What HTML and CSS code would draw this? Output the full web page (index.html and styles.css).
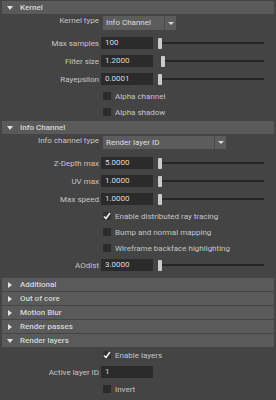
FILE: index.html
```html
<!DOCTYPE html>
<html lang="en">
  <head>
    <meta charset="UTF-8" />
    <meta name="viewport" content="width=device-width, initial-scale=1.0" />
    <title>Render Settings</title>
    <link rel="stylesheet" href="styles.css">
  </head>
  <body>
    <div class="panel">
      <!-- Kernel -->
      <div class="section-head open"><span class="arrow"></span>Kernel</div>
      <div class="section-body">
        <div class="row select-row">
          <div class="label">Kernel type</div>
          <div class="dropdown small">
            <span class="dropdown-text">Info Channel</span>
            <span class="dropdown-btn"><span class="down"></span></span>
          </div>
        </div>
        <div class="row">
          <div class="label">Max samples</div>
          <div class="field">100</div>
          <div class="slider"><div class="knob"></div><div class="track"></div></div>
        </div>
        <div class="row">
          <div class="label">Filter size</div>
          <div class="field">1.2000</div>
          <div class="slider"><div class="knob moved"></div><div class="track"></div></div>
        </div>
        <div class="row">
          <div class="label">Rayepsilon</div>
          <div class="field">0.0001</div>
          <div class="slider"><div class="knob"></div><div class="track"></div></div>
        </div>
        <div class="row check-row">
          <div class="label"></div>
          <div class="checkbox"></div>
          <span class="check-label">Alpha channel</span>
        </div>
        <div class="row check-row">
          <div class="label"></div>
          <div class="checkbox"></div>
          <span class="check-label">Alpha shadow</span>
        </div>
      </div>

      <!-- Info Channel -->
      <div class="section-head open"><span class="arrow"></span>Info Channel</div>
      <div class="section-body info">
        <div class="row select-row">
          <div class="label">Info channel type</div>
          <div class="dropdown wide">
            <span class="dropdown-text">Render layer ID</span>
            <span class="dropdown-btn"><span class="down"></span></span>
          </div>
        </div>
        <div class="row">
          <div class="label">Z-Depth max</div>
          <div class="field">5.0000</div>
          <div class="slider"><div class="knob"></div><div class="track"></div></div>
        </div>
        <div class="row">
          <div class="label">UV max</div>
          <div class="field">1.0000</div>
          <div class="slider"><div class="knob"></div><div class="track"></div></div>
        </div>
        <div class="row">
          <div class="label">Max speed</div>
          <div class="field">1.0000</div>
          <div class="slider"><div class="knob"></div><div class="track"></div></div>
        </div>
        <div class="row check-row">
          <div class="label"></div>
          <div class="checkbox checked">
            <svg width="8" height="8" viewBox="0 0 8 8"><polyline points="1,4.5 3,6.5 7,1" fill="none" stroke="#f0f0f0" stroke-width="1.6"/></svg>
          </div>
          <span class="check-label">Enable distributed ray tracing</span>
        </div>
        <div class="row check-row">
          <div class="label"></div>
          <div class="checkbox"></div>
          <span class="check-label">Bump and normal mapping</span>
        </div>
        <div class="row check-row">
          <div class="label"></div>
          <div class="checkbox"></div>
          <span class="check-label">Wireframe backface highlighting</span>
        </div>
        <div class="row">
          <div class="label">AOdist</div>
          <div class="field">3.0000</div>
          <div class="slider"><div class="knob"></div><div class="track"></div></div>
        </div>
      </div>

      <!-- collapsed sections -->
      <div class="section-head closed"><span class="arrow"></span>Additional</div>
      <div class="section-head closed"><span class="arrow"></span>Out of core</div>
      <div class="section-head closed"><span class="arrow"></span>Motion Blur</div>
      <div class="section-head closed"><span class="arrow"></span>Render passes</div>

      <!-- Render layers -->
      <div class="section-head open"><span class="arrow"></span>Render layers</div>
      <div class="section-body">
        <div class="row check-row">
          <div class="label"></div>
          <div class="checkbox checked">
            <svg width="8" height="8" viewBox="0 0 8 8"><polyline points="1,4.5 3,6.5 7,1" fill="none" stroke="#f0f0f0" stroke-width="1.6"/></svg>
          </div>
          <span class="check-label">Enable layers</span>
        </div>
        <div class="row">
          <div class="label">Active layer ID</div>
          <div class="field">1</div>
        </div>
        <div class="row check-row">
          <div class="label"></div>
          <div class="checkbox"></div>
          <span class="check-label">Invert</span>
        </div>
      </div>
    </div>
  </body>
</html>
```

FILE: styles.css
```css
body {
  margin: 0;
  padding: 0;
  background-color: #444444;
  font-family: Roboto, "Liberation Sans", sans-serif;
  font-size: 8px;
  color: #c4c4c4;
  overflow: hidden;
}

.panel {
  width: 276px;
  height: 400px;
  padding-top: 1px;
  box-sizing: border-box;
}

/* section headers */
.section-head {
  display: flex;
  align-items: center;
  height: 13px;
  margin: 1px 2px 0 2px;
  background-color: #5a5a5a;
  color: #d6d6d6;
  font-weight: 500;
  padding-left: 5px;
}
.section-head:first-child {
  margin-top: 0;
}
.arrow {
  width: 13px;
  display: flex;
  align-items: center;
}
.open .arrow::before {
  content: "";
  border-left: 3px solid transparent;
  border-right: 3px solid transparent;
  border-top: 4px solid #e2e2e2;
}
.closed .arrow::before {
  content: "";
  margin-left: 1px;
  border-top: 3.5px solid transparent;
  border-bottom: 3.5px solid transparent;
  border-left: 4px solid #e2e2e2;
}

.section-body.info {
  padding-bottom: 3px;
}

/* rows */
.row {
  display: flex;
  align-items: center;
  height: 18px;
}
.select-row {
  height: 20px;
  align-items: flex-start;
  padding-top: 2px;
  box-sizing: border-box;
}
.check-row {
  height: 16px;
}
.label {
  width: 99px;
  padding-right: 2px;
  text-align: right;
  flex-shrink: 0;
  white-space: nowrap;
}

/* number fields */
.field {
  width: 48px;
  height: 12px;
  line-height: 12px;
  padding-left: 4px;
  background-color: #2b2b2b;
  color: #dcdcdc;
  flex-shrink: 0;
}

/* sliders */
.slider {
  display: flex;
  align-items: center;
  margin-left: 5px;
  width: 106px;
}
.knob {
  width: 4px;
  height: 11px;
  background-color: #cbcbcb;
  border-radius: 1px;
  flex-shrink: 0;
}
.knob.moved {
  margin-left: 3px;
}
.track {
  flex: 1;
  height: 2px;
  background-color: #262626;
}

/* dropdowns */
.dropdown {
  display: flex;
  height: 14px;
  margin-left: 2px;
  background-color: #5c5c5c;
  color: #dedede;
}
.dropdown.small {
  width: 73px;
}
.dropdown.wide {
  width: 123px;
  height: 13px;
}
.dropdown-text {
  flex: 1;
  padding-left: 3px;
  line-height: 14px;
  white-space: nowrap;
  overflow: hidden;
}
.dropdown.wide .dropdown-text {
  line-height: 13px;
}
.dropdown-btn {
  width: 11px;
  border-left: 1px solid #4a4a4a;
  display: flex;
  align-items: center;
  justify-content: center;
}
.down {
  border-left: 3px solid transparent;
  border-right: 3px solid transparent;
  border-top: 3px solid #d8d8d8;
}

/* checkboxes */
.checkbox {
  width: 8px;
  height: 8px;
  margin-left: 2px;
  background-color: #2b2b2b;
  flex-shrink: 0;
  display: flex;
}
.checkbox.checked {
  background-color: #333333;
}
.check-label {
  margin-left: 4px;
  white-space: nowrap;
}
```
